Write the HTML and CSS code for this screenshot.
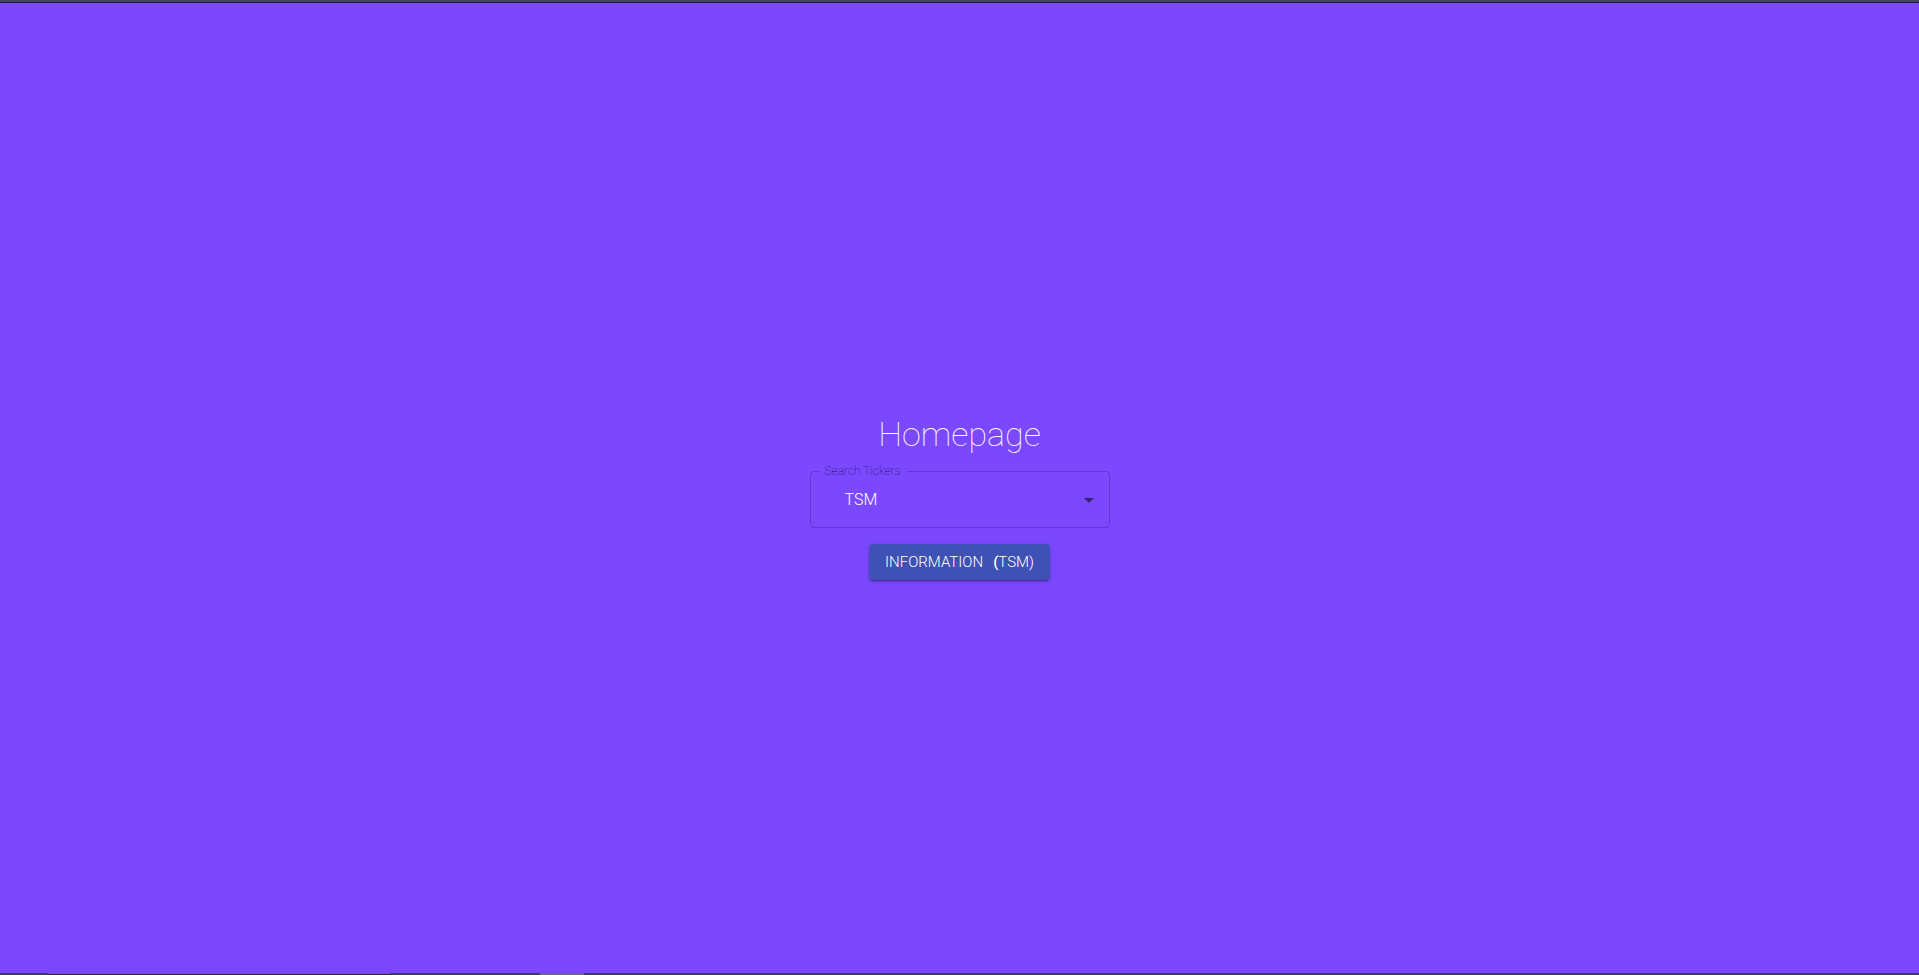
FILE: index.html
```html
<!DOCTYPE html>
<html lang="en">
<head>
<meta charset="utf-8">
<title>Homepage</title>
<link rel="stylesheet" href="styles.css">
</head>
<body>
<div class="topbar"></div>
<main class="page">
  <h1 class="title">Homepage</h1>
  <fieldset class="field">
    <legend class="field-legend"><label for="ticker">Search Tickers</label></legend>
    <div class="field-row">
      <select class="select" id="ticker"><option>TSM</option></select>
      <svg class="arrow" viewBox="0 0 24 24" aria-hidden="true"><path d="M7 10l5 5 5-5z"/></svg>
    </div>
  </fieldset>
  <button class="button" type="button"><span>Information</span><span><span class="paren">(</span>TSM)</span></button>
</main>
<div class="taskbar">
  <div class="task-start"></div>
  <div class="task-search"></div>
  <div class="task-space"></div>
  <div class="task-active"></div>
</div>
</body>
</html>
```
FILE: styles.css
```css
* {
  box-sizing: border-box;
}

body {
  margin: 0;
  min-height: 100vh;
  display: flex;
  flex-direction: column;
  background: #7b48fd;
  color: #fff;
  font-family: Roboto, sans-serif;
  font-weight: 300;
}

.topbar {
  height: 3px;
  background: #414a57;
  border-bottom: 1px solid #1f1550;
}

.page {
  flex: 1;
  display: flex;
  flex-direction: column;
  align-items: center;
  justify-content: center;
  padding-top: 16px;
}

.title {
  margin: 0;
  font-size: 34px;
  line-height: 42px;
  font-weight: 100;
}

.field {
  width: 300px;
  margin: 8px 0 16px;
  padding: 0 8px;
  border: 1px solid #6535d3;
  border-radius: 4px;
}

.field-legend {
  padding: 0 6px 2px;
  font-size: 12px;
  line-height: 16px;
  font-weight: 100;
  color: #1c0850;
}

.field-row {
  display: grid;
  align-items: center;
  height: 46px;
  padding-bottom: 8px;
}

.select {
  grid-area: 1 / 1;
  width: 100%;
  height: 38px;
  padding: 0 32px 0 26px;
  border: 0;
  appearance: none;
  background: transparent;
  color: #fff;
  font: 300 16px/20px Roboto, sans-serif;
}

.arrow {
  grid-area: 1 / 1;
  justify-self: end;
  width: 24px;
  height: 24px;
  fill: #381f77;
  pointer-events: none;
}

.button {
  display: flex;
  align-items: center;
  justify-content: center;
  gap: 10px;
  height: 36px;
  padding: 0 16px;
  border: 0;
  border-radius: 4px;
  background: #3f51b5;
  color: #fff;
  font: 300 15px/24px Roboto, sans-serif;
  text-transform: uppercase;
  box-shadow: 0 3px 1px -2px rgba(0, 0, 0, 0.2), 0 2px 2px 0 rgba(0, 0, 0, 0.14), 0 1px 5px 0 rgba(0, 0, 0, 0.12);
}

.paren {
  font-weight: 500;
}

.taskbar {
  display: flex;
  height: 2px;
  background: #3b3a68;
}

.task-start {
  width: 48px;
}

.task-search {
  width: 342px;
  border-top: 1px solid #72569e;
  background: #38204a;
}

.task-space {
  width: 150px;
}

.task-active {
  width: 44px;
  background: #6b5d98;
}
```
